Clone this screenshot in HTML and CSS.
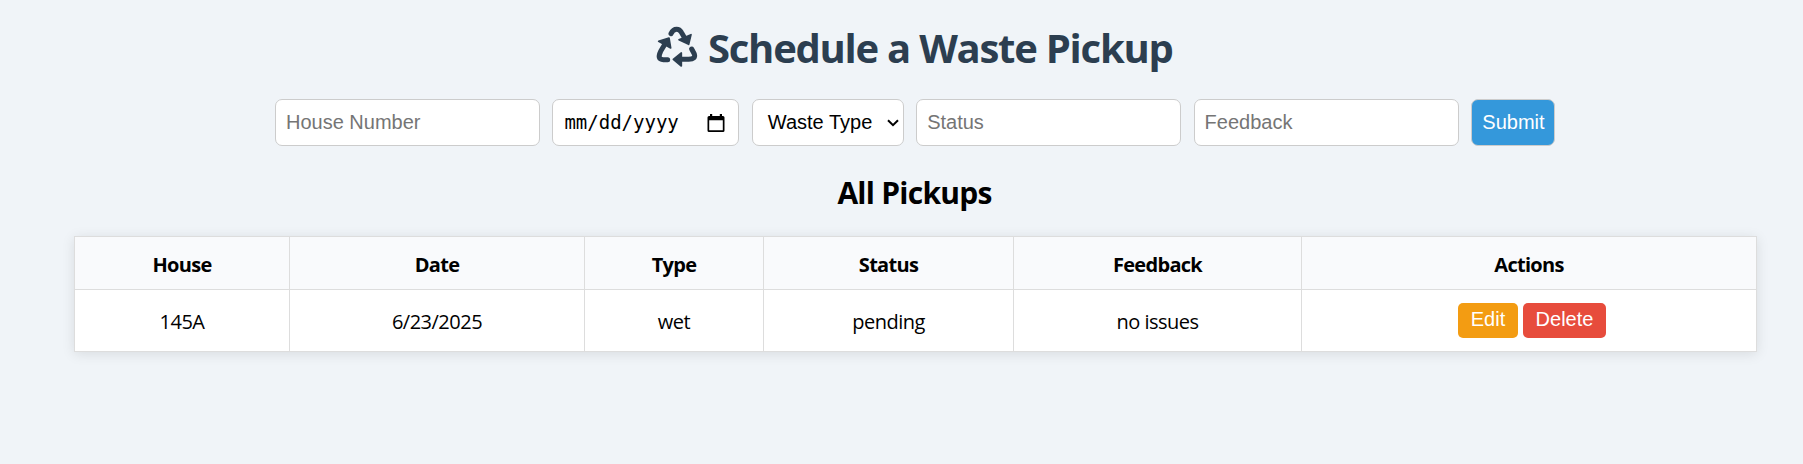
FILE: index.html
```html
<!DOCTYPE html>
<html lang="en">
<head>
<meta charset="utf-8">
<title>Schedule a Waste Pickup</title>
<link rel="stylesheet" href="styles.css">
</head>
<body>
<h1 class="title">
  <svg class="recycle" viewBox="0 0 126 126" aria-hidden="true">
    <g fill="none" stroke="currentColor" stroke-width="15" stroke-linecap="round" stroke-linejoin="round">
      <path d="M45 20 Q51 7 62 7 Q71 7 76 16 L86 33"/>
      <path d="M27 51 L14 73 Q2 98 22 98 H35"/>
      <path d="M78 97 H98 Q120 96 115 81 L107 66"/>
    </g>
    <g fill="currentColor" stroke="currentColor" stroke-width="5" stroke-linejoin="round">
      <path d="M69 38 L105 23 L98 52 Z"/>
      <path d="M8 43 L39 33 L44 63 Z"/>
      <path d="M52 97 L76 78 V117 Z"/>
    </g>
  </svg>
  <span class="title-text">Schedule a Waste Pickup</span>
</h1>
<form class="pickup-form">
  <input class="field text" type="text" placeholder="House Number">
  <div class="field date">
    <span class="date-text">mm/dd/yyyy</span>
    <svg class="calendar" viewBox="0 0 18 20" aria-hidden="true">
      <path fill="currentColor" fill-rule="evenodd" d="M3 1h2.200v2h7.600V1H15v2h1q1.500 0 1.500 1.500v13q0 1.500-1.500 1.500H2Q.5 19 .5 17.500v-13Q.5 3 2 3h1zM2.200 7.200v10h13.600v-10z"/>
    </svg>
  </div>
  <div class="field select">
    <span>Waste Type</span>
    <svg class="chevron" viewBox="0 0 12 8" aria-hidden="true"><path d="M1 1.200l5 5 5-5" fill="none" stroke="currentColor" stroke-width="2"/></svg>
  </div>
  <input class="field text" type="text" placeholder="Status">
  <input class="field text" type="text" placeholder="Feedback">
  <button class="field submit" type="button">Submit</button>
</form>
<h2 class="subtitle">All Pickups</h2>
<table class="pickups">
  <colgroup><col class="c-house"><col class="c-date"><col class="c-type"><col class="c-status"><col class="c-feedback"><col class="c-actions"></colgroup>
  <thead>
    <tr><th>House</th><th>Date</th><th>Type</th><th>Status</th><th>Feedback</th><th>Actions</th></tr>
  </thead>
  <tbody>
    <tr>
      <td>145A</td><td>6/23/2025</td><td>wet</td><td>pending</td><td>no issues</td>
      <td><div class="actions"><button class="action edit" type="button">Edit</button><button class="action delete" type="button">Delete</button></div></td>
    </tr>
  </tbody>
</table>
</body>
</html>
```

FILE: styles.css
```css
* { box-sizing: border-box; }
body {
  margin: 0;
  padding: 20px 46px 0 74px;
  height: 464px;
  overflow: hidden;
  background: #f0f4f8;
  color: #000;
  font-family: "Open Sans", "Noto Sans", sans-serif;
}
.title {
  display: flex;
  align-items: center;
  margin: 0 0 0 582px;
  height: 56px;
  gap: 10px;
  color: #2c3e50;
  font-size: 40px;
  line-height: 56px;
  white-space: nowrap;
}
.recycle { width: 42px; height: 42px; flex: none; overflow: visible; }
.title-text { letter-spacing: -1.250px; }
.pickup-form {
  display: flex;
  gap: 12.400px;
  margin: 23px 0 0 201px;
}
.field {
  height: 47px;
  flex: none;
  border: 1px solid #ccc;
  border-radius: 7px;
  background: #fff;
  font: 20px "Liberation Sans", Arial, sans-serif;
}
.text { width: 265px; padding: 0 10px 1px; }
.text::placeholder { color: #757575; opacity: 1; }
.date {
  display: flex;
  align-items: center;
  justify-content: space-between;
  width: 187px;
  padding: 0 13px 0 11px;
}
.date-text { padding-bottom: 1px; font: 19px "DejaVu Sans Mono", monospace; }
.calendar { width: 18px; height: 20px; }
.select {
  display: flex;
  align-items: center;
  justify-content: space-between;
  width: 152px;
  padding: 0 4px 0 15px;
}
.chevron { width: 12px; height: 8px; }
.submit {
  width: 84px;
  padding: 0 0 1px 1px;
  background: #3498db;
  color: #fff;
}
.subtitle {
  margin: 26px 0 23px;
  padding-right: 2px;
  text-align: center;
  font-size: 30px;
  line-height: 41px;
  letter-spacing: -0.750px;
}
.pickups {
  width: 1683px;
  table-layout: fixed;
  border-collapse: collapse;
  background: #fff;
  box-shadow: 0 2px 12px rgba(0, 0, 0, 0.1);
  font-size: 20px;
  text-align: center;
}
.c-house { width: 215px; }
.c-date { width: 295px; }
.c-type { width: 179px; }
.c-status { width: 250px; }
.c-feedback { width: 288px; }
.pickups th, .pickups td { border: 1px solid #ddd; padding: 0; }
.pickups th { height: 53px; padding-top: 2px; background: #f9fafc; letter-spacing: -0.700px; }
.pickups td { height: 62px; padding-top: 2px; letter-spacing: -0.500px; }
.actions { display: flex; justify-content: center; gap: 5px; padding: 0 0 3px 5px; }
.action {
  height: 35px;
  border: 0;
  border-radius: 5px;
  padding: 0 0 1px 1px;
  color: #fff;
  font: 20px "Liberation Sans", Arial, sans-serif;
  letter-spacing: 0;
}
.edit { width: 60px; background: #f39c12; }
.delete { width: 83px; background: #e74c3c; }
```
